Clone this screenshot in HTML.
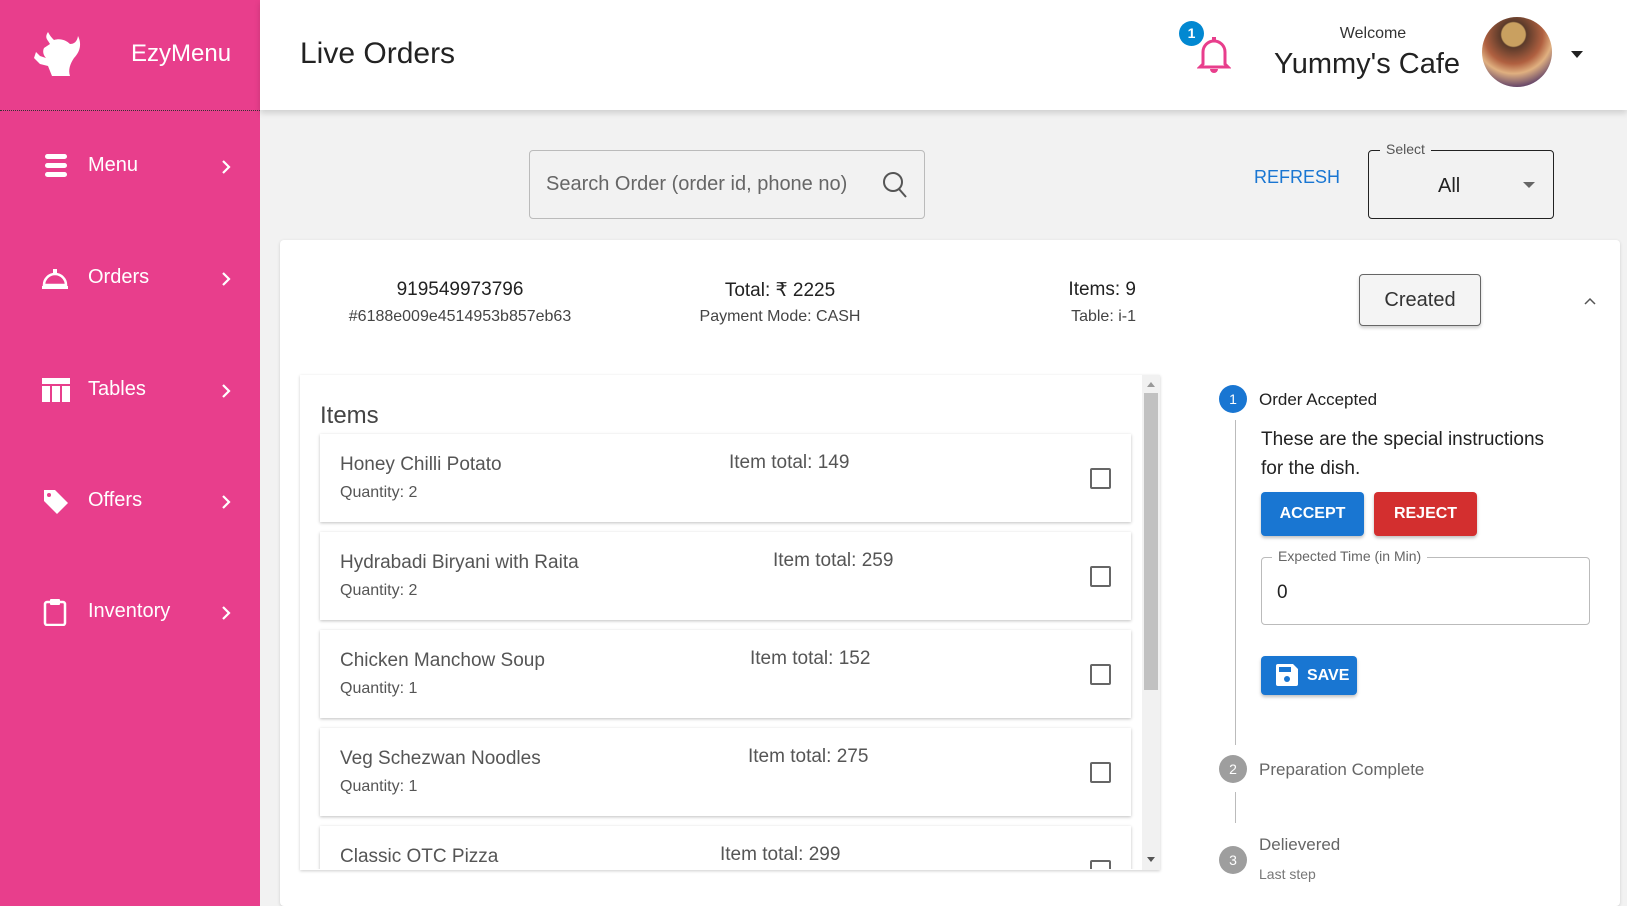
<!DOCTYPE html>
<html style="width:1627px;height:906px;overflow:hidden"><head><meta charset="utf-8"><style>
*{box-sizing:border-box;margin:0;padding:0}
body{width:1627px;height:906px;overflow:hidden;background:#f2f2f2;font-family:"Liberation Sans",sans-serif;position:relative;color:#222}
.a{position:absolute;white-space:nowrap}
#side{position:absolute;left:0;top:0;width:260px;height:906px;background:#e83e8c}
#sep{position:absolute;left:0;top:110px;width:260px;border-top:1px dotted #333}
.nav{position:absolute;left:0;width:260px;color:#fff;font-size:20px}
.nav .t{position:absolute;left:88px;top:-12px}
.nav .c{position:absolute;left:221px;top:-7px}
#hdr{position:absolute;left:260px;top:0;width:1367px;height:110px;background:#fff;box-shadow:0 3px 6px rgba(0,0,0,.15)}
.card{position:absolute;left:280px;top:240px;width:1340px;height:666px;background:#fff;border-radius:4px;box-shadow:0 1px 3px rgba(0,0,0,.15)}
.row{position:absolute;left:320px;width:811px;height:88px;background:#fff;box-shadow:0 1px 3px rgba(0,0,0,.25)}
.row .n{position:absolute;left:20px;top:20px;font-size:19px;color:#555}
.row .q{position:absolute;left:20px;top:50px;font-size:16px;color:#555}
.row .it{position:absolute;top:18px;font-size:19px;color:#555}
.row .cb{position:absolute;left:770px;top:34px;width:21px;height:21px;border:2px solid #666;border-radius:2px}
.btn{position:absolute;color:#fff;font-size:16px;font-weight:bold;text-align:center;border-radius:4px;box-shadow:0 2px 3px rgba(0,0,0,.25)}
.step{position:absolute;width:28px;height:28px;border-radius:50%;color:#fff;font-size:14px;text-align:center;line-height:28px}
</style></head><body>
<div id="side">
<svg class="a" style="left:28px;top:30px" width="54" height="48" viewBox="0 0 54 48"><path d="M20 2c-4 6 0 8 2 12l-6 4c-2 4 0 8 2 10l-6-2-4-4-2 6 6 6 8 2 4 10h18c-2-6 0-12 4-18 6-6 8-14 4-22-1 6-4 8-8 8-4-4-10-6-16-4-2-2-4-4-6-8z" fill="#fff"/></svg>
<div class="a" style="left:131px;top:40px;color:#fff;font-size:24px">EzyMenu</div>
<div id="sep"></div>
<svg width="0" height="0" style="position:absolute"><defs><path id="ch" d="M2 2l6 6-6 6" fill="none" stroke="#fff" stroke-width="2.2"/></defs></svg>
<div class="nav" style="top:166px"><svg class="a" style="left:44px;top:-12px" width="24" height="24"><rect x="1" y="0" width="22" height="5" rx="2.5" fill="#fff"/><rect x="1" y="9" width="22" height="5" rx="2.5" fill="#fff"/><rect x="1" y="18" width="22" height="5" rx="2.5" fill="#fff"/></svg><span class="t">Menu</span><svg class="c" width="12" height="16"><use href="#ch"/></svg></div>
<div class="nav" style="top:278px"><svg class="a" style="left:41px;top:-12px" width="28" height="24"><path d="M3 19a11 11 0 0 1 22 0z" fill="none" stroke="#fff" stroke-width="2.5"/><rect x="1" y="20" width="26" height="3" fill="#fff"/><rect x="12" y="3" width="4" height="4" fill="#fff"/></svg><span class="t">Orders</span><svg class="c" width="12" height="16"><use href="#ch"/></svg></div>
<div class="nav" style="top:390px"><svg class="a" style="left:42px;top:-12px" width="28" height="24"><rect x="0" y="0" width="28" height="6" fill="#fff"/><rect x="0" y="8" width="8" height="16" fill="#fff"/><rect x="10" y="8" width="8" height="16" fill="#fff"/><rect x="20" y="8" width="8" height="16" fill="#fff"/></svg><span class="t">Tables</span><svg class="c" width="12" height="16"><use href="#ch"/></svg></div>
<div class="nav" style="top:501px"><svg class="a" style="left:42px;top:-13px" width="28" height="28"><path d="M2 2h11l13 13-11 11L2 13z" fill="#fff"/><circle cx="7" cy="7" r="2" fill="#e83e8c"/></svg><span class="t">Offers</span><svg class="c" width="12" height="16"><use href="#ch"/></svg></div>
<div class="nav" style="top:612px"><svg class="a" style="left:43px;top:-14px" width="24" height="28"><rect x="2" y="4" width="20" height="23" rx="2" fill="none" stroke="#fff" stroke-width="2.5"/><rect x="7" y="1" width="10" height="6" rx="1" fill="#fff"/></svg><span class="t">Inventory</span><svg class="c" width="12" height="16"><use href="#ch"/></svg></div>
</div>
<div id="hdr">
<div class="a" style="left:40px;top:37px;font-size:30px;color:#222">Live Orders</div>
<svg class="a" style="left:937px;top:34px" width="34" height="40" viewBox="0 0 34 40"><path d="M6 30V18a11 11 0 0 1 22 0v12l3 3H3z" fill="none" stroke="#e83e8c" stroke-width="3"/><rect x="15" y="3" width="4" height="4" fill="#e83e8c"/><path d="M13 35a4 4 0 0 0 8 0z" fill="#e83e8c"/></svg>
<div class="a" style="left:919px;top:21px;width:25px;height:25px;border-radius:50%;background:#0288d1;color:#fff;font-size:14px;font-weight:bold;text-align:center;line-height:25px">1</div>
<div class="a" style="left:1078px;top:25px;font-size:16px;color:#333;width:70px;text-align:center">Welcome</div>
<div class="a" style="left:1014px;top:48px;font-size:29px;color:#222">Yummy's Cafe</div>
<div class="a" style="left:1222px;top:17px;width:70px;height:70px;border-radius:50%;background:radial-gradient(circle at 45% 25%,#c9a060 0 18%,#5a3a2a 20%,#b06040 45%,#e0b080 60%,#6a4a6a 80%)"></div>
<div class="a" style="left:1311px;top:51px;border-left:6px solid transparent;border-right:6px solid transparent;border-top:7px solid #222"></div>
</div>
<div class="a" style="left:529px;top:150px;width:396px;height:69px;border:1px solid #bbb;border-radius:4px"></div>
<div class="a" style="left:546px;top:173px;font-size:20px;color:#666">Search Order (order id, phone no)</div>
<svg class="a" style="left:882px;top:171px" width="26" height="28"><circle cx="11" cy="11" r="9" fill="none" stroke="#555" stroke-width="2"/><path d="M17 18l7 8" stroke="#555" stroke-width="2"/></svg>
<div class="a" style="left:1254px;top:167px;font-size:18px;color:#1976d2">REFRESH</div>
<div class="a" style="left:1368px;top:150px;width:186px;height:69px;border:1px solid #222;border-radius:4px"></div>
<div class="a" style="left:1380px;top:141px;padding:0 6px;background:#f2f2f2;font-size:14px;color:#555">Select</div>
<div class="a" style="left:1438px;top:175px;font-size:20px;color:#222">All</div>
<div class="a" style="left:1523px;top:182px;border-left:6px solid transparent;border-right:6px solid transparent;border-top:6px solid #666"></div>
<div class="card"></div>
<div class="a" style="left:360px;top:279px;width:200px;text-align:center;font-size:19px;color:#222">919549973796</div>
<div class="a" style="left:330px;top:308px;width:260px;text-align:center;font-size:16px;color:#444">#6188e009e4514953b857eb63</div>
<div class="a" style="left:680px;top:279px;width:200px;text-align:center;font-size:19px;color:#222">Total: ₹ 2225</div>
<div class="a" style="left:660px;top:308px;width:240px;text-align:center;font-size:16px;color:#444">Payment Mode: CASH</div>
<div class="a" style="left:1000px;top:279px;width:136px;text-align:right;font-size:19px;color:#222">Items: 9</div>
<div class="a" style="left:1000px;top:308px;width:136px;text-align:right;font-size:16px;color:#444">Table: i-1</div>
<div class="a" style="left:1359px;top:274px;width:122px;height:52px;border:1px solid #666;border-radius:4px;background:#f4f4f4;box-shadow:0 2px 3px rgba(0,0,0,.2);font-size:20px;color:#333;text-align:center;line-height:50px">Created</div>
<svg class="a" style="left:1583px;top:296px" width="14" height="10"><path d="M2 8l5-5 5 5" fill="none" stroke="#555" stroke-width="1.5"/></svg>
<div class="a" style="left:300px;top:375px;width:860px;height:495px;background:#fff;box-shadow:0 1px 3px rgba(0,0,0,.2);overflow:hidden">
<div class="a" style="left:20px;top:27px;font-size:24px;color:#444">Items</div>
<div class="a" style="left:842px;top:0;width:18px;height:495px;background:#f1f1f1"></div>
<div class="a" style="left:844px;top:18px;width:14px;height:297px;background:#c1c1c1"></div>
<div class="a" style="left:847px;top:7px;border-left:4px solid transparent;border-right:4px solid transparent;border-bottom:5px solid #999"></div>
<div class="a" style="left:847px;top:482px;border-left:4px solid transparent;border-right:4px solid transparent;border-top:5px solid #555"></div>
</div>
<div style="position:absolute;left:0;top:0;width:1627px;height:869px;overflow:hidden">
<div class="row" style="top:434px"><div class="n">Honey Chilli Potato</div><div class="q">Quantity: 2</div><div class="it" style="left:409px">Item total: 149</div><div class="cb"></div></div>
<div class="row" style="top:532px"><div class="n">Hydrabadi Biryani with Raita</div><div class="q">Quantity: 2</div><div class="it" style="left:453px">Item total: 259</div><div class="cb"></div></div>
<div class="row" style="top:630px"><div class="n">Chicken Manchow Soup</div><div class="q">Quantity: 1</div><div class="it" style="left:430px">Item total: 152</div><div class="cb"></div></div>
<div class="row" style="top:728px"><div class="n">Veg Schezwan Noodles</div><div class="q">Quantity: 1</div><div class="it" style="left:428px">Item total: 275</div><div class="cb"></div></div>
<div class="row" style="top:826px"><div class="n">Classic OTC Pizza</div><div class="q">Quantity: 1</div><div class="it" style="left:400px">Item total: 299</div><div class="cb"></div></div>
</div>
<div class="step" style="left:1219px;top:385px;background:#1976d2">1</div>
<div class="a" style="left:1259px;top:390px;font-size:17px;color:#222">Order Accepted</div>
<div class="a" style="left:1235px;top:420px;width:1px;height:325px;background:#bbb"></div>
<div class="a" style="left:1261px;top:425px;font-size:19px;color:#222;line-height:29px">These are the special instructions<br>for the dish.</div>
<div class="btn" style="left:1261px;top:492px;width:103px;height:44px;line-height:44px;background:#1976d2">ACCEPT</div>
<div class="btn" style="left:1374px;top:492px;width:103px;height:44px;line-height:44px;background:#d32f2f">REJECT</div>
<div class="a" style="left:1261px;top:557px;width:329px;height:68px;border:1px solid #bbb;border-radius:4px"></div>
<div class="a" style="left:1272px;top:548px;padding:0 6px;background:#fff;font-size:14px;color:#666">Expected Time (in Min)</div>
<div class="a" style="left:1277px;top:582px;font-size:19px;color:#222">0</div>
<div class="btn" style="left:1261px;top:656px;width:96px;height:39px;line-height:39px;background:#1976d2;text-align:left;padding-left:46px">SAVE</div>
<svg class="a" style="left:1276px;top:664px" width="22" height="22"><path d="M0 2a2 2 0 0 1 2-2h15l5 5v15a2 2 0 0 1-2 2H2a2 2 0 0 1-2-2z" fill="#fff"/><rect x="3" y="3" width="12" height="5" fill="#1976d2"/><circle cx="11" cy="15" r="3" fill="#1976d2"/></svg>
<div class="step" style="left:1219px;top:755px;background:#9e9e9e">2</div>
<div class="a" style="left:1259px;top:760px;font-size:17px;color:#666">Preparation Complete</div>
<div class="a" style="left:1235px;top:792px;width:1px;height:31px;background:#bbb"></div>
<div class="step" style="left:1219px;top:846px;background:#9e9e9e">3</div>
<div class="a" style="left:1259px;top:835px;font-size:17px;color:#666">Delievered</div>
<div class="a" style="left:1259px;top:866px;font-size:14px;color:#777">Last step</div>
</body></html>
